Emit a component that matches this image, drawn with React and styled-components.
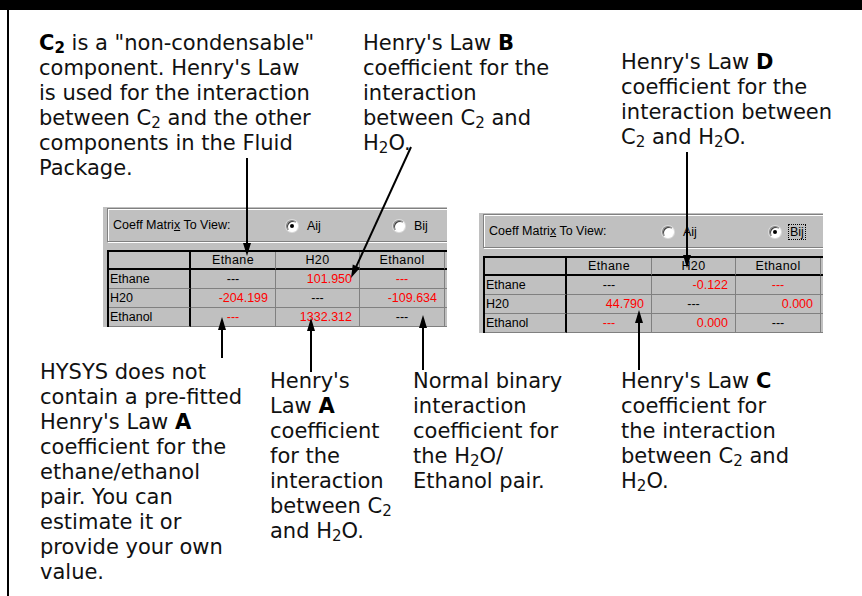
import React from 'react';
import styled, { createGlobalStyle } from 'styled-components';

const GlobalStyle = createGlobalStyle`
    html, body {
        margin: 0;
        padding: 0;
        background: #fff;
    }
    body {
        font-family: "DejaVu Sans", Verdana, sans-serif;
    }
`;

// matrix data for the two dialog snapshots
const aij = [
    ['Ethane', [['---'], ['101.950', true], ['---', true]]],
    ['H20', [['-204.199', true], ['---'], ['-109.634', true]]],
    ['Ethanol', [['---', true], ['1332.312', true], ['---']]],
];

const bij = [
    ['Ethane', [['---'], ['-0.122', true], ['---', true]]],
    ['H20', [['44.790', true], ['---'], ['0.000', true]]],
    ['Ethanol', [['---', true], ['0.000', true], ['---']]],
];

// callout arrows, page coordinates (from -> tip)
const arrows = [
    [247, 158, 247, 256],
    [411, 147, 351, 278],
    [687, 152, 687, 268],
    [222, 358, 222, 317],
    [311, 372, 311, 318],
    [423, 370, 423, 315],
    [639, 370, 639, 310],
];

const Arrow = ({ x1, y1, x2, y2 }) => {
    const len = Math.hypot(x2 - x1, y2 - y1);
    const ux = (x2 - x1) / len;
    const uy = (y2 - y1) / len;
    const hl = 13;
    const hw = 4;
    const bx = x2 - ux * hl;
    const by = y2 - uy * hl;
    const pts = `${x2},${y2} ${bx - uy * hw},${by + ux * hw} ${bx + uy * hw},${by - ux * hw}`;
    return (
        <g>
            <line x1={x1} y1={y1} x2={bx + ux} y2={by + uy} stroke="#000" strokeWidth="2" />
            <polygon points={pts} fill="#000" />
        </g>
    );
};

const C2 = () => <>C<Sub>2</Sub></>;
const H2O = () => <>H<Sub>2</Sub>O</>;

const Dialog = ({ data, selected, $ml, $mt }) => (
    <DialogBox $ml={$ml} $mt={$mt}>
        <GroupBox>
            <GroupLabel>Coeff Matri<u>x</u> To View:</GroupLabel>
            <RadioItem $at={178}>
                <Radio $checked={selected === 'A'} />
                <RadioText>Aij</RadioText>
            </RadioItem>
            <RadioItem $at={285}>
                <Radio $checked={selected === 'B'} />
                <RadioText $focus={selected === 'B'}>Bij</RadioText>
            </RadioItem>
        </GroupBox>
        <Grid>
            <Cell $head $label />
            <Cell $head>Ethane</Cell>
            <Cell $head>H20</Cell>
            <Cell $head>Ethanol</Cell>
            <Cell $head />
            {data.map(([name, vals]) => (
                <React.Fragment key={name}>
                    <Cell $label>{name}</Cell>
                    {vals.map(([t, red], i) => (
                        <Cell key={i} $red={red} $num={t !== '---'}>{t}</Cell>
                    ))}
                    <Cell />
                </React.Fragment>
            ))}
            <Cell $label />
            <Cell />
            <Cell />
            <Cell />
            <Cell />
        </Grid>
    </DialogBox>
);

export default function App() {
    return (
        <Page>
            <GlobalStyle />
            <TopBar />
            <Frame>
                <TopRow>
                    <Note $ml={30} $w={324}>
                        <b>C<Sub>2</Sub></b> is a "non-condensable"<br />
                        component. Henry's Law<br />
                        is used for the interaction<br />
                        between <C2 /> and the other<br />
                        components in the Fluid<br />
                        Package.
                    </Note>
                    <Note $w={258}>
                        Henry's Law <b>B</b><br />
                        coefficient for the<br />
                        interaction<br />
                        between <C2 /> and<br />
                        <H2O />.
                    </Note>
                    <Note $mt={19}>
                        Henry's Law <b>D</b><br />
                        coefficient for the<br />
                        interaction between<br />
                        <C2 /> and <H2O />.
                    </Note>
                </TopRow>
                <DialogRow>
                    <Dialog data={aij} selected="A" $ml={94} />
                    <Dialog data={bij} selected="B" $ml={32} $mt={6} />
                </DialogRow>
                <BottomRow>
                    <Note $ml={31} $w={230}>
                        HYSYS does not<br />
                        contain a pre-fitted<br />
                        Henry's Law <b>A</b><br />
                        coefficient for the<br />
                        ethane/ethanol<br />
                        pair. You can<br />
                        estimate it or<br />
                        provide your own<br />
                        value.
                    </Note>
                    <Note $mt={9} $w={143}>
                        Henry's<br />
                        Law <b>A</b><br />
                        coefficient<br />
                        for the<br />
                        interaction<br />
                        between <C2 /><br />
                        and <H2O />.
                    </Note>
                    <Note $mt={9} $w={208}>
                        Normal binary<br />
                        interaction<br />
                        coefficient for<br />
                        the <H2O />/<br />
                        Ethanol pair.
                    </Note>
                    <Note $mt={9}>
                        Henry's Law <b>C</b><br />
                        coefficient for<br />
                        the interaction<br />
                        between <C2 /> and<br />
                        <H2O />.
                    </Note>
                </BottomRow>
            </Frame>
            <Overlay width="862" height="596">
                {arrows.map(([x1, y1, x2, y2], i) => (
                    <Arrow key={i} x1={x1} y1={y1} x2={x2} y2={y2} />
                ))}
            </Overlay>
        </Page>
    );
}

const Page = styled.div`
    position: relative;
    width: 862px;
    height: 596px;
    overflow: hidden;
`;

const TopBar = styled.div`
    height: 10px;
    background: #000;
`;

const Frame = styled.div`
    margin-left: 7px;
    border-left: 2px solid #000;
    height: 586px;
`;

const TopRow = styled.div`
    display: flex;
    align-items: flex-start;
    padding-top: 21px;
`;

const DialogRow = styled.div`
    display: flex;
    align-items: flex-start;
    margin-top: 26px;
`;

const BottomRow = styled.div`
    display: flex;
    align-items: flex-start;
    margin-top: 27px;
`;

const Note = styled.div`
    flex: none;
    width: ${p => (p.$w ? `${p.$w}px` : 'auto')};
    margin-left: ${p => p.$ml || 0}px;
    margin-top: ${p => p.$mt || 0}px;
    font-family: "DejaVu Sans", Verdana, sans-serif;
    font-size: 21px;
    line-height: 25px;
    color: #111;
    white-space: nowrap;

    b {
        font-weight: bold;
        color: #000;
    }
`;

const Sub = styled.sub`
    font-size: 0.72em;
    vertical-align: -0.2em;
    line-height: 0;
`;

const DialogBox = styled.div`
    flex: none;
    width: 344px;
    height: 120px;
    margin-left: ${p => p.$ml || 0}px;
    margin-top: ${p => p.$mt || 0}px;
    padding: 1px 0 0 4px;
    box-sizing: border-box;
    background: #c0c0c0;
    overflow: hidden;
    font-family: "Liberation Sans", Arial, sans-serif;
    font-size: 12.5px;
    color: #000;
`;

const GroupBox = styled.div`
    position: relative;
    display: flex;
    align-items: center;
    width: 420px;
    height: 34px;
    box-sizing: border-box;
    padding-left: 5px;
    border: 1px solid #808080;
    box-shadow: inset 1px 1px 0 #fff, 1px 1px 0 #fff;
`;

const GroupLabel = styled.span`
    width: 173px;
    flex: none;

    u {
        text-decoration: underline;
    }
`;

const RadioItem = styled.div`
    position: absolute;
    left: ${p => p.$at}px;
    top: 10px;
    display: flex;
    align-items: center;
    gap: 8px;
`;

const Radio = styled.span`
    width: 12px;
    height: 12px;
    box-sizing: border-box;
    border-radius: 50%;
    border: 1px solid;
    border-color: #808080 #fff #fff #808080;
    background: #fff;
    box-shadow: inset 1px 1px 0 #404040, 0 0 0 1px #dcdcdc;
    position: relative;

    &::after {
        content: '';
        display: ${p => (p.$checked ? 'block' : 'none')};
        position: absolute;
        left: 3px;
        top: 3px;
        width: 4px;
        height: 4px;
        border-radius: 50%;
        background: #000;
    }
`;

const RadioText = styled.span`
    padding: 0 1px;
    outline: ${p => (p.$focus ? '1px dotted #000' : 'none')};
    line-height: 14px;
`;

const Grid = styled.div`
    display: grid;
    grid-template-columns: 82px 85px 84px 85px 60px;
    grid-template-rows: 18px repeat(4, 19px);
    margin-top: 8px;
    width: 420px;
    border-left: 2px solid #000;
    border-top: 2px solid #000;
`;

const Cell = styled.div`
    box-sizing: border-box;
    display: flex;
    align-items: center;
    justify-content: ${p => (p.$label ? 'flex-start' : p.$num ? 'flex-end' : 'center')};
    padding: ${p => (p.$label ? '0 0 0 1px' : p.$num ? '0 7px 0 0' : '0')};
    border-right: ${p => (p.$label ? '2px solid #000' : '1px solid #808080')};
    border-bottom: ${p => (p.$head ? '2px solid #000' : '1px solid #808080')};
    color: ${p => (p.$red ? '#ff0000' : '#000')};
    letter-spacing: ${p => (p.$head ? '0.4px' : '0')};
    white-space: nowrap;
    line-height: 1;
`;

const Overlay = styled.svg`
    position: absolute;
    left: 0;
    top: 0;
    pointer-events: none;
`;
